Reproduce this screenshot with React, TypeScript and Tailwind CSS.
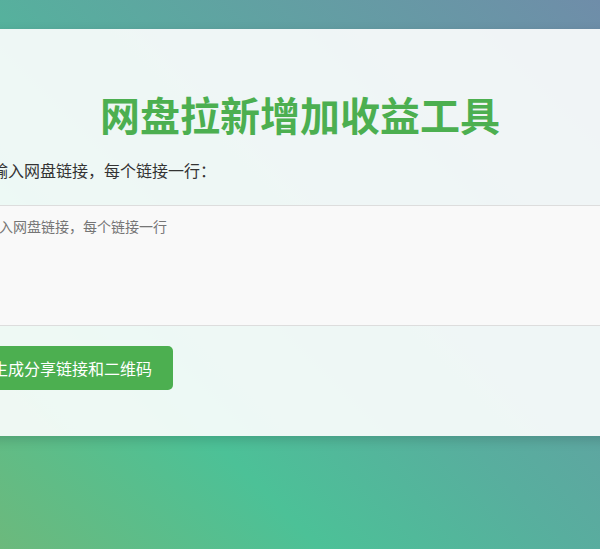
export default function App() {
  return (
    <div
      className="min-h-screen h-[549px] overflow-hidden pt-[29px] bg-[linear-gradient(45deg,#6cb97c_0%,#4cc197_28%,#58ae9e_50%,#6f8da9_100%)]"
      style={{ fontFamily: '"Noto Sans CJK SC", "Noto Sans", sans-serif' }}
    >
      <div className="ml-[-60px] w-[720px] h-[407px] bg-white/90 rounded-lg shadow-[0_4px_12px_rgba(0,0,0,0.15)] pt-[61px] flex flex-col">
        <h1 className="text-center text-[40px] leading-[48px] font-bold text-[#4caf50]">
          网盘拉新增加收益工具
        </h1>
        <label className="mt-[22px] ml-[36px] text-[16px] leading-[20px] font-normal text-[#333]">
          请输入网盘链接，每个链接一行：
        </label>
        <textarea
          className="mt-[25px] ml-[19px] w-[680px] h-[121px] shrink-0 resize-none border border-[#ddd] bg-[#f9f9f9] px-[11px] py-[10px] text-[14px] leading-[20px] text-[#333] placeholder:text-[#757575] outline-none"
          placeholder="请输入网盘链接，每个链接一行"
        />
        <div className="mt-[20px] ml-[31px]">
          <button className="h-[44px] w-[202px] rounded-[5px] bg-[#4caf50] text-white text-[16px] leading-[20px]">
            生成分享链接和二维码
          </button>
        </div>
      </div>
    </div>
  );
}
